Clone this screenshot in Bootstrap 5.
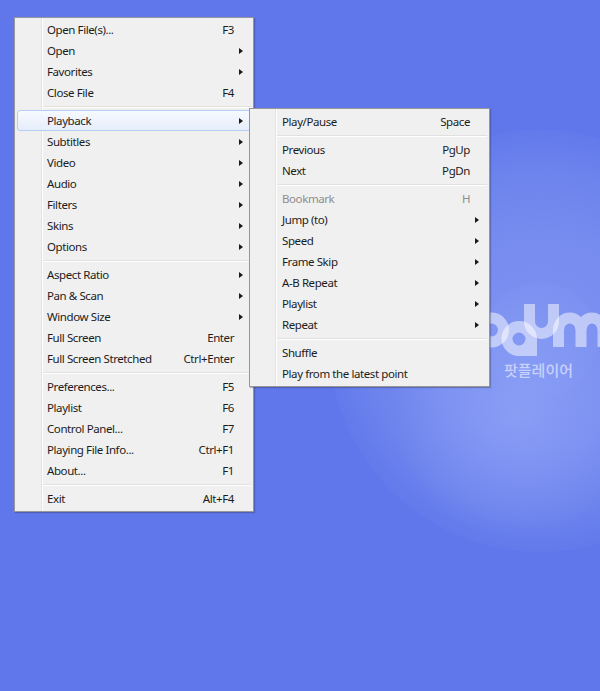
<!DOCTYPE html>
<html lang="en">
<head>
<meta charset="utf-8">
<title>PotPlayer menu</title>
<link href="https://cdn.jsdelivr.net/npm/bootstrap@5.3.0/dist/css/bootstrap.min.css" rel="stylesheet">
<style>
html,body{height:100%;margin:0}
.stage{position:relative;width:600px;height:691px;overflow:hidden;background-color:#5f77ea;
background-image:radial-gradient(circle 58px at 540px 340px,rgba(140,160,250,.12) 0 98%,transparent 100%),radial-gradient(circle 125px at 518px 412px,rgba(150,170,250,.55) 0,rgba(150,170,250,0) 100%),radial-gradient(circle 212px at 540px 341px,#7d92f0 0,#778cef 50%,#6c83ed 82%,#627aeb 99%,#5f77ea 100%)}
.logo{position:absolute;left:0;top:0}
.logo-fill{fill:#fff;fill-opacity:.5;fill-rule:evenodd}
.logo-line{fill:none;stroke:#fff;stroke-opacity:.5;stroke-width:11}
.logo-caption{font-family:"Noto Sans CJK KR",sans-serif;font-size:15px;font-weight:500;fill:#c8d1fc}
.pm{position:absolute;display:block;margin:0;min-width:0;border:1px solid #979797;border-radius:0;padding:2px;background-color:#f0f0f0;box-shadow:1px 1px 1px rgba(40,40,60,.3);font-family:"Noto Sans",sans-serif;font-size:11.5px;letter-spacing:-.41px;line-height:21px;color:#1c1c1c;
background-image:linear-gradient(to right,transparent 26px,#e2e3e3 26px,#e2e3e3 27px,#fff 27px,#fff 28px,transparent 28px)}
.pm-main{left:14px;top:17px;width:240px;padding-top:1px}
.pm-sub{left:249px;top:108px;width:241px;background-image:linear-gradient(to right,transparent 25px,#e2e3e3 25px,#e2e3e3 26px,#fff 26px,#fff 27px,transparent 27px)}
.pm .dropdown-item{display:flex;justify-content:space-between;align-items:center;height:21px;padding:0 17px 0 30px;color:#1c1c1c;font-size:inherit;background:transparent;white-space:nowrap}
.pm .dropdown-item.is-open{border:1px solid #b4cdf2;border-radius:3px;padding:0 16px 0 29px;background:linear-gradient(#f7f9fd,#e6eefb);line-height:19px}
.pm .dropdown-item.disabled{color:#8d8d8d}
.pm .dropdown-divider{height:2px;margin:3px 0 2px 26px;border:0;opacity:1;background:linear-gradient(#e0e0e0 50%,#fff 50%)}
.pm-sub .dropdown-divider{margin-left:25px}
.sub-arrow{width:0;height:0;margin-right:-9px;border-style:solid;border-width:3.5px 0 3.5px 4px;border-color:transparent transparent transparent #1a1a1a}
</style>
</head>
<body>
<div class="stage">
<svg class="logo" width="600" height="691" viewBox="0 0 600 691" aria-hidden="true">
<path class="logo-fill" d="M491.500 312.500a17.500 17.500 0 1 1 0 35a17.500 17.500 0 1 1 0-35ZM491.500 323.500a6.500 6.500 0 1 0 0 13a6.500 6.500 0 1 0 0-13Z"/>
<path class="logo-fill" d="M519 321a18 18 0 0 1 18 18V356H519a17.500 17.500 0 1 1 0-35ZM519 332.500a6.500 6.500 0 1 0 0 13a6.500 6.500 0 1 0 0-13Z"/>
<path class="logo-line" d="M529.500 304V321.500a12 12 0 0 0 24 0V304"/>
<path class="logo-line" d="M558.500 347V330a11.250 12 0 0 1 22.500 0V347M581 330a11 12 0 0 1 22 0V347"/>
<text class="logo-caption" x="504" y="376">팟플레이어</text>
</svg>

<div class="dropdown-menu pm pm-main">
<a class="dropdown-item" href="#"><span>Open File(s)...</span><span>F3</span></a>
<a class="dropdown-item" href="#"><span>Open</span><i class="sub-arrow"></i></a>
<a class="dropdown-item" href="#"><span>Favorites</span><i class="sub-arrow"></i></a>
<a class="dropdown-item" href="#"><span>Close File</span><span>F4</span></a>
<hr class="dropdown-divider">
<a class="dropdown-item is-open" href="#"><span>Playback</span><i class="sub-arrow"></i></a>
<a class="dropdown-item" href="#"><span>Subtitles</span><i class="sub-arrow"></i></a>
<a class="dropdown-item" href="#"><span>Video</span><i class="sub-arrow"></i></a>
<a class="dropdown-item" href="#"><span>Audio</span><i class="sub-arrow"></i></a>
<a class="dropdown-item" href="#"><span>Filters</span><i class="sub-arrow"></i></a>
<a class="dropdown-item" href="#"><span>Skins</span><i class="sub-arrow"></i></a>
<a class="dropdown-item" href="#"><span>Options</span><i class="sub-arrow"></i></a>
<hr class="dropdown-divider">
<a class="dropdown-item" href="#"><span>Aspect Ratio</span><i class="sub-arrow"></i></a>
<a class="dropdown-item" href="#"><span>Pan &amp; Scan</span><i class="sub-arrow"></i></a>
<a class="dropdown-item" href="#"><span>Window Size</span><i class="sub-arrow"></i></a>
<a class="dropdown-item" href="#"><span>Full Screen</span><span>Enter</span></a>
<a class="dropdown-item" href="#"><span>Full Screen Stretched</span><span>Ctrl+Enter</span></a>
<hr class="dropdown-divider">
<a class="dropdown-item" href="#"><span>Preferences...</span><span>F5</span></a>
<a class="dropdown-item" href="#"><span>Playlist</span><span>F6</span></a>
<a class="dropdown-item" href="#"><span>Control Panel...</span><span>F7</span></a>
<a class="dropdown-item" href="#"><span>Playing File Info...</span><span>Ctrl+F1</span></a>
<a class="dropdown-item" href="#"><span>About...</span><span>F1</span></a>
<hr class="dropdown-divider">
<a class="dropdown-item" href="#"><span>Exit</span><span>Alt+F4</span></a>
</div>

<div class="dropdown-menu pm pm-sub">
<a class="dropdown-item" href="#"><span>Play/Pause</span><span>Space</span></a>
<hr class="dropdown-divider">
<a class="dropdown-item" href="#"><span>Previous</span><span>PgUp</span></a>
<a class="dropdown-item" href="#"><span>Next</span><span>PgDn</span></a>
<hr class="dropdown-divider">
<a class="dropdown-item disabled" href="#"><span>Bookmark</span><span>H</span></a>
<a class="dropdown-item" href="#"><span>Jump (to)</span><i class="sub-arrow"></i></a>
<a class="dropdown-item" href="#"><span>Speed</span><i class="sub-arrow"></i></a>
<a class="dropdown-item" href="#"><span>Frame Skip</span><i class="sub-arrow"></i></a>
<a class="dropdown-item" href="#"><span>A-B Repeat</span><i class="sub-arrow"></i></a>
<a class="dropdown-item" href="#"><span>Playlist</span><i class="sub-arrow"></i></a>
<a class="dropdown-item" href="#"><span>Repeat</span><i class="sub-arrow"></i></a>
<hr class="dropdown-divider">
<a class="dropdown-item" href="#"><span>Shuffle</span></a>
<a class="dropdown-item" href="#"><span>Play from the latest point</span></a>
</div>
</div>
<script src="https://cdn.jsdelivr.net/npm/bootstrap@5.3.0/dist/js/bootstrap.bundle.min.js"></script>
</body>
</html>
